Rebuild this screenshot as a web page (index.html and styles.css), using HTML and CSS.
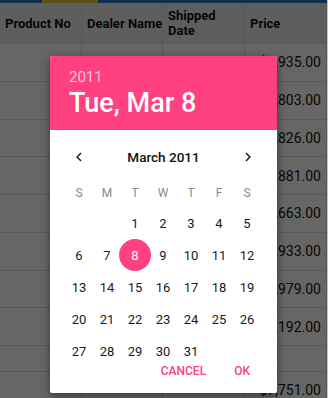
FILE: index.html
```html
<!DOCTYPE html>
<html>
<head>
<meta charset="utf-8">
<link rel="stylesheet" href="styles.css">
</head>
<body>
<div class="screen">
  <div class="topbar"><span class="seg blue s1"></span><span class="seg gold"></span><span class="seg blue s3"></span></div>
  <div class="grid">
    <div class="row head">
      <div class="cell">Product No</div>
      <div class="cell">Dealer Name</div>
      <div class="cell wrap">Shipped<br>Date</div>
      <div class="cell">Price</div>
    </div>
    <div class="row"><div class="cell num"></div><div class="cell"></div><div class="cell"></div><div class="cell num">$3,935.00</div></div>
    <div class="row"><div class="cell num"></div><div class="cell"></div><div class="cell"></div><div class="cell num">$2,803.00</div></div>
    <div class="row"><div class="cell num"></div><div class="cell"></div><div class="cell"></div><div class="cell num">$6,826.00</div></div>
    <div class="row"><div class="cell num"></div><div class="cell"></div><div class="cell"></div><div class="cell num">$9,881.00</div></div>
    <div class="row"><div class="cell num"></div><div class="cell"></div><div class="cell"></div><div class="cell num">$4,663.00</div></div>
    <div class="row"><div class="cell num"></div><div class="cell"></div><div class="cell"></div><div class="cell num">$5,933.00</div></div>
    <div class="row"><div class="cell num"></div><div class="cell"></div><div class="cell"></div><div class="cell num">$7,979.00</div></div>
    <div class="row"><div class="cell num"></div><div class="cell"></div><div class="cell"></div><div class="cell num">$9,192.00</div></div>
    <div class="row short"><div class="cell num"></div><div class="cell"></div><div class="cell"></div><div class="cell dot">.</div></div>
    <div class="row last"><div class="cell num"></div><div class="cell"></div><div class="cell"></div><div class="cell num">$7,751.00</div></div>
  </div>
  <div class="overlay"></div>
  <div class="dialog">
    <div class="dlg-head">
      <div class="year">2011</div>
      <div class="date">Tue, Mar 8</div>
    </div>
    <div class="dlg-body">
      <div class="nav">
        <svg class="chev" viewBox="0 0 24 24" width="18" height="18"><path d="M15.41 7.41L14 6l-6 6 6 6 1.41-1.41L10.83 12z"/></svg>
        <div class="month">March 2011</div>
        <svg class="chev" viewBox="0 0 24 24" width="18" height="18"><path d="M8.59 16.59L10 18l6-6-6-6-1.41 1.41L13.17 12z"/></svg>
      </div>
      <div class="weekdays">
        <span>S</span><span>M</span><span>T</span><span>W</span><span>T</span><span>F</span><span>S</span>
      </div>
      <div class="days">
        <span></span><span></span><span>1</span><span>2</span><span>3</span><span>4</span><span>5</span>
        <span>6</span><span>7</span><span class="sel">8</span><span>9</span><span>10</span><span>11</span><span>12</span>
        <span>13</span><span>14</span><span>15</span><span>16</span><span>17</span><span>18</span><span>19</span>
        <span>20</span><span>21</span><span>22</span><span>23</span><span>24</span><span>25</span><span>26</span>
        <span>27</span><span>28</span><span>29</span><span>30</span><span>31</span><span></span><span></span>
      </div>
      <div class="actions">
        <span class="btn">CANCEL</span>
        <span class="btn">OK</span>
      </div>
    </div>
  </div>
</div>
</body>
</html>
```

FILE: styles.css
```css
html, body {
  margin: 0;
  padding: 0;
}
body {
  width: 328px;
  height: 398px;
  overflow: hidden;
  font-family: Roboto, "Noto Sans", sans-serif;
  background: #fff;
}
.screen {
  position: relative;
  width: 327px;
  height: 398px;
  overflow: hidden;
  border-right: 1px solid #c4c4c4;
  background: #fff;
}
.topbar {
  display: flex;
  height: 3px;
}
.seg { display: block; height: 3px; }
.blue { background: #2a78c8; }
.s1 { width: 42px; }
.gold { width: 56px; background: #f0c23a; }
.s3 { flex: 1; }

.grid {
  display: flex;
  flex-direction: column;
}
.row {
  display: grid;
  grid-template-columns: 82px 81px 82px 82px;
  height: 37.75px;
  box-sizing: border-box;
  border-bottom: 1px solid #dcdcdc;
  flex: none;
}
.row.head {
  height: 41px;
  background: #ececec;
}
.row.short { height: 26px; }
.cell {
  display: flex;
  align-items: center;
  box-sizing: border-box;
  padding: 0 5px;
  border-right: 1px solid #dcdcdc;
  font-size: 14px;
  color: #111;
  white-space: nowrap;
  overflow: hidden;
}
.head .cell {
  font-weight: 700;
  font-size: 13px;
  line-height: 15px;
  padding-left: 5px;
  padding-right: 0;
}
.cell.num { justify-content: flex-end; }
.cell.dot { padding-left: 30px; align-items: flex-start; line-height: 14px; }

.overlay {
  position: absolute;
  inset: 0;
  background: rgba(0, 0, 0, 0.6);
}

.dialog {
  position: absolute;
  left: 50px;
  top: 56px;
  width: 227px;
  height: 337px;
  background: #fff;
  border-radius: 2px;
  box-shadow: 0 3px 10px rgba(0, 0, 0, 0.45);
  display: flex;
  flex-direction: column;
  overflow: hidden;
}
.dlg-head {
  height: 74px;
  box-sizing: border-box;
  background: #ff4081;
  padding: 12px 0 0 19px;
  color: #fff;
}
.year {
  font-size: 15px;
  line-height: 18px;
  color: rgba(255, 255, 255, 0.72);
}
.date {
  font-size: 27px;
  font-weight: 500;
  line-height: 34px;
}
.dlg-body {
  flex: 1;
  display: flex;
  flex-direction: column;
}
.nav {
  height: 54px;
  display: flex;
  align-items: center;
  justify-content: space-between;
  padding: 0 20px;
}
.chev { fill: #222; }
.month {
  font-size: 13.5px;
  font-weight: 500;
  color: #111;
}
.weekdays, .days {
  display: grid;
  grid-template-columns: repeat(7, 28px);
  justify-content: center;
  margin-left: -1px;
}
.weekdays {
  height: 18px;
  align-items: center;
}
.weekdays span {
  text-align: center;
  font-size: 12px;
  color: #8a8a8a;
}
.days {
  margin-top: 5px;
  grid-auto-rows: 32px;
  height: 142px;
}
.days span {
  display: flex;
  align-items: center;
  justify-content: center;
  font-size: 13px;
  color: #1a1a1a;
}
.days span.sel {
  position: relative;
  color: #fff;
  z-index: 0;
}
.days span.sel::before {
  content: "";
  position: absolute;
  left: -2px;
  top: 0;
  width: 32px;
  height: 32px;
  border-radius: 50%;
  background: #ff4081;
  z-index: -1;
}
.actions {
  height: 44px;
  display: flex;
  justify-content: flex-end;
  align-items: center;
  gap: 28px;
  padding-right: 27px;
}
.btn {
  font-size: 12px;
  font-weight: 500;
  color: #ff4081;
}
```
